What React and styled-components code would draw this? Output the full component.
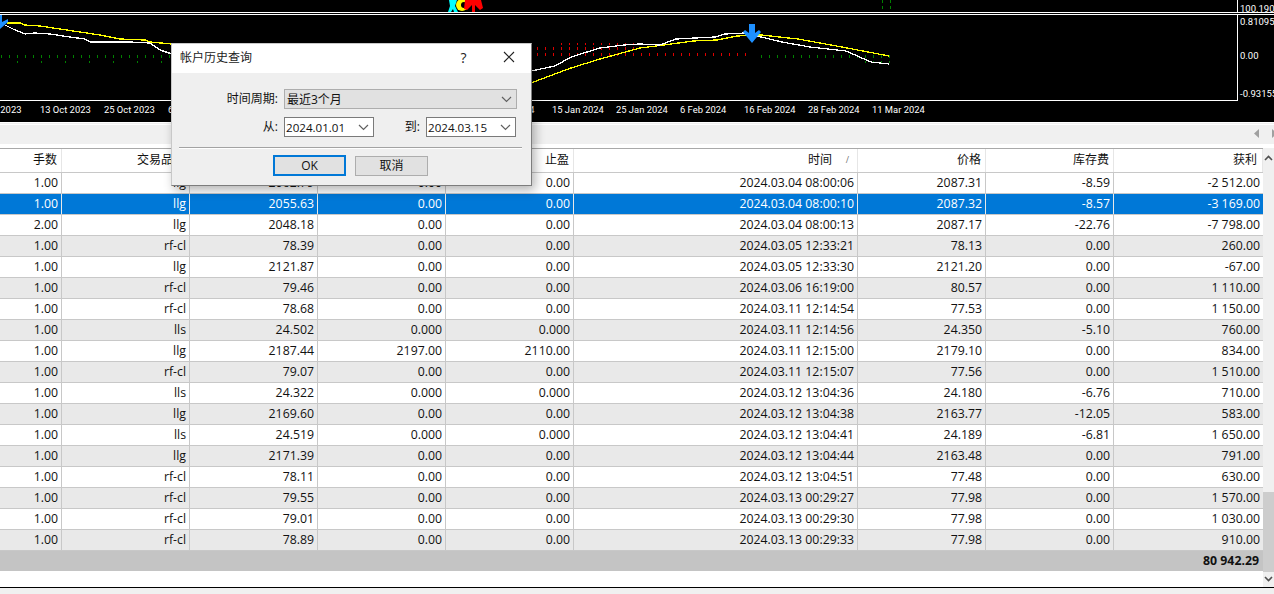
import styled, { createGlobalStyle } from "styled-components"

const GlobalStyle = createGlobalStyle`
html, body { margin:0; padding:0; background:#f0f0f0; overflow:hidden; }
body { font-family:"Open Sans","Noto Sans CJK SC",sans-serif; font-size:12.3px; color:#111; }
`
const Page = styled.div`
position:relative;
width:1274px;
height:594px;
overflow:hidden;
display:flex;
flex-direction:column;
`
const Chart = styled.div`
height:122px;
background:#000;
display:flex;
flex-direction:column;
flex-shrink:0;
color:#fff;
`
const ChartRow = styled.div`
position:relative;
height:${p => p.$h}px;
width:1238px;
box-sizing:border-box;
border-right:1px solid #fff;
border-bottom:${p => p.$line ? '1px solid #fff' : 'none'};
`
const FullLine = styled.div`
height:1px;
background:#fff;
margin-top:${p => p.$gap || 0}px;
flex-shrink:0;
`
const Drawing = styled.svg`
display:block;
`
const PriceLabel = styled.span`
position:absolute;
left:1240px;
top:${p => p.$y}px;
font-family:"Roboto",sans-serif;
font-size:9.5px;
line-height:14px;
white-space:nowrap;
color:#fff;
`
const TimeAxis = styled.div`
display:flex;
margin-left:-24px;
margin-top:1px;
width:1300px;
`
const TimeCell = styled.span`
flex:0 0 64px;
font-family:"Roboto",sans-serif;
font-size:9.4px;
line-height:16px;
white-space:nowrap;
color:#fff;
`
const Toolbar = styled.div`
height:17px;
padding-bottom:2px;
margin-top:1px;
background:#f0f0f0;
border-top:1px solid #fff;
border-bottom:4px solid #fff;
display:flex;
justify-content:flex-end;
align-items:center;
gap:13px;
flex-shrink:0;
`
const Grid = styled.div`
display:flex;
height:439px;
flex-shrink:0;
`
const Table = styled.div`
width:1263px;
background:#fff;
`
const cols = '62px 128px 128px 128px 128px 284px 128px 128px 149px'
const HeadRow = styled.div`
display:grid;
grid-template-columns:${cols};
height:25px;
box-sizing:border-box;
border-top:1px solid #a9a9a9;
border-bottom:1px solid #c8c8c8;
background:#fff;
`
const HeadCell = styled.div`
border-right:1px solid #e6e6e6;
padding-right:${p => p.$pad || 4}px;
text-align:right;
font-size:12px;
line-height:21px;
white-space:nowrap;
overflow:hidden;
position:relative;
`
const SortMark = styled.span`
position:absolute;
right:8px;
top:0;
font-size:9px;
color:#777;
`
const Row = styled.div`
display:grid;
grid-template-columns:${cols};
height:21px;
box-sizing:border-box;
border-bottom:1px solid #c8c8c8;
background:${p => p.$selected ? '#0078d7' : p.$alt ? '#e9e9e9' : '#fff'};
color:${p => p.$selected ? '#fff' : '#111'};
`
const Cell = styled.div`
border-right:1px solid ${p => p.$selected ? '#e8e8e8' : '#c8c8c8'};
padding-right:3px;
text-align:right;
line-height:20px;
white-space:nowrap;
&:last-child { border-right:none; padding-right:3px; }
`
const TotalRow = styled.div`
height:20px;
background:#c4c4c4;
text-align:right;
padding-right:4px;
font-weight:700;
line-height:20px;
`
const Scroll = styled.div`
width:11px;
background:#f0f0f0;
display:flex;
flex-direction:column;
justify-content:space-between;
align-items:center;
position:relative;
`
const ScrollThumb = styled.div`
position:absolute;
left:0;
right:0;
top:344px;
height:80px;
background:#cdcdcd;
`
const ScrollArrow = styled.svg`
display:block;
margin:${p => p.$down ? '0 0 5px' : '7px 0 0'};
`
const Footer = styled.div`
flex:1;
border-top:1px solid #000;
background:#f0f0f0;
position:relative;
`
const Dialog = styled.div`
position:absolute;
left:171px;
top:43px;
width:361px;
height:143px;
box-sizing:border-box;
background:#efefef;
border:1px solid #7d7d7d;
border-top-color:#c8c8c8;
border-left-color:#c8c8c8;
box-shadow:3px 4px 10px rgba(0,0,0,.3);
font-size:12px;
`
const TitleBar = styled.div`
height:29px;
background:#fff;
display:flex;
align-items:center;
padding-left:8px;
color:#222;
`
const Title = styled.span`
flex:1;
margin-top:-3px;
`
const TitleBtn = styled.span`
width:${p => p.$w}px;
display:flex;
justify-content:center;
margin-top:-3px;
font-size:14px;
`
const Form = styled.div`
display:grid;
grid-template-columns:105px 90px 52px 90px;
grid-auto-rows:20px;
row-gap:8px;
padding:16px 0 0 7px;
position:relative;
`
const Label = styled.label`
text-align:right;
line-height:20px;
padding-right:6px;
color:#111;
`
const Select = styled.div`
grid-column:span 3;
width:233px;
box-sizing:border-box;
background:#e1e1e1;
border:1px solid #adadad;
display:flex;
align-items:center;
justify-content:space-between;
padding:0 4px 0 2px;
`
const DateBox = styled.div`
box-sizing:border-box;
background:#fff;
border:1px solid #7a7a7a;
display:flex;
align-items:center;
justify-content:space-between;
padding:0 4px 0 1px;
font-size:11.6px;
`
const Chevron = () => <svg width="11" height="7" viewBox="0 0 11 7">
    <path d="M1 1l4.500 4.500L10 1" fill="none" stroke="#606060" strokeWidth="1.200" />
</svg>
const Divider = styled.div`
margin:10px 9px 0 7px;
height:1px;
background:#a3a3a3;
box-shadow:0 1px 0 #fff;
`
const Buttons = styled.div`
display:flex;
align-items:flex-start;
gap:9px;
margin-top:7px;
padding-left:101px;
`
const Btn = styled.button`
width:73px;
height:${p => p.$primary ? 21 : 20}px;
margin-top:${p => p.$primary ? 0 : 1}px;
box-sizing:border-box;
background:#e1e1e1;
border:${p => p.$primary ? '2px solid #0078d7' : '1px solid #adadad'};
font:inherit;
line-height:16px;
color:#111;
padding:0;
`

const yellowA = '7,23 20,23 25,25 40,26 60,29 80,32 100,35 120,39 145,40 150,42 172,44'
const whiteA = '5,25 15,30 25,34 35,33 50,34 70,37 85,39 90,42 130,42 150,43 160,50 172,54'
const whiteB = '531,71 555,66 571,57 600,48 624,45 640,44 660,45 676,39 715,37 725,34 745,33 761,37 782,42 810,47 846,51 871,62 889,64'
const yellowB = '531,83 571,68 600,59 640,48 664,45 693,41 717,40 737,36 761,35 798,39 842,47 889,56'

const ticks = (from, to) => {
    let res = []
    for (let x = from; x <= to; x += 8) res.push(x)
    return res
}

// histogram of the lower pane, drawn as the dashes the terminal leaves on a black ground
const GreenTick = ({ x, low }) => <>
    <rect x={x} y={55} width="1" height="3" fill="#008000" />
    {low && <rect x={x} y={61} width="1" height="2" fill="#008000" />}
</>
const RedTick = ({ x }) => <>
    {x > 560 && x < 640 && <rect x={x} y={43} width="1" height="2" fill="#e00000" />}
    {x < 640 && <rect x={x} y={47} width="1" height="3" fill="#e00000" />}
    <rect x={x} y={53} width="1" height="3" fill="#e00000" />
</>
const Curve = ({ points, color }) => <polyline points={points} fill="none" stroke={color} strokeWidth="1.300" shapeRendering="crispEdges" />

const MainPane = () => <Drawing width="1237" height="85" viewBox="0 15 1237 85">
    {ticks(1, 170).map(x => <GreenTick key={x} x={x} low={x % 24 == 17} />)}
    {ticks(537, 745).map(x => <RedTick key={x} x={x} />)}
    {ticks(761, 889).map(x => <GreenTick key={x} x={x} low={x > 860} />)}
    <Curve points={yellowA} color="#ffff00" />
    <Curve points={whiteA} color="#fff" />
    <Curve points={yellowB} color="#ffff00" />
    <Curve points={whiteB} color="#fff" />
    <path d="M-3 15h5v7l6-3v3l-8 7-8-7v-3l5 3z" fill="#1e90ff" />
    <path d="M749 24h6v9l4-3 2 2-9 11-9-11 2-2 4 3z" fill="#1e90ff" />
</Drawing>

const TopPane = () => <Drawing width="1237" height="12" viewBox="0 0 1237 12">
    <path d="M449 0h8l-2 6 3 6h-4l-1-3-2 3h-3l2-6z" fill="#00ffff" />
    <circle cx="462" cy="5" r="6" fill="#ffff00" />
    <circle cx="464" cy="5" r="3" fill="#000" />
    <path d="M465 0h16l2 8-3 2-5-5v7h-3V5l-5 5-3-1z" fill="#ff0000" />
    <rect x="882" y="0" width="1" height="3" fill="#008000" />
    <rect x="882" y="6" width="1" height="3" fill="#008000" />
    <rect x="890" y="0" width="1" height="3" fill="#008000" />
    <rect x="890" y="6" width="1" height="3" fill="#008000" />
</Drawing>

const dates = ['1 Oct 2023', '13 Oct 2023', '25 Oct 2023', '6 Nov 2023', '16 Nov 2023', '28 Nov 2023', '8 Dec 2023', '20 Dec 2023', '3 Jan 2024', '15 Jan 2024', '25 Jan 2024', '6 Feb 2024', '16 Feb 2024', '28 Feb 2024', '11 Mar 2024']

const rows = [
    ['1.00', 'llg', '2062.79', '0.00', '0.00', '2024.03.04 08:00:06', '2087.31', '-8.59', '-2 512.00'],
    ['1.00', 'llg', '2055.63', '0.00', '0.00', '2024.03.04 08:00:10', '2087.32', '-8.57', '-3 169.00'],
    ['2.00', 'llg', '2048.18', '0.00', '0.00', '2024.03.04 08:00:13', '2087.17', '-22.76', '-7 798.00'],
    ['1.00', 'rf-cl', '78.39', '0.00', '0.00', '2024.03.05 12:33:21', '78.13', '0.00', '260.00'],
    ['1.00', 'llg', '2121.87', '0.00', '0.00', '2024.03.05 12:33:30', '2121.20', '0.00', '-67.00'],
    ['1.00', 'rf-cl', '79.46', '0.00', '0.00', '2024.03.06 16:19:00', '80.57', '0.00', '1 110.00'],
    ['1.00', 'rf-cl', '78.68', '0.00', '0.00', '2024.03.11 12:14:54', '77.53', '0.00', '1 150.00'],
    ['1.00', 'lls', '24.502', '0.000', '0.000', '2024.03.11 12:14:56', '24.350', '-5.10', '760.00'],
    ['1.00', 'llg', '2187.44', '2197.00', '2110.00', '2024.03.11 12:15:00', '2179.10', '0.00', '834.00'],
    ['1.00', 'rf-cl', '79.07', '0.00', '0.00', '2024.03.11 12:15:07', '77.56', '0.00', '1 510.00'],
    ['1.00', 'lls', '24.322', '0.000', '0.000', '2024.03.12 13:04:36', '24.180', '-6.76', '710.00'],
    ['1.00', 'llg', '2169.60', '0.00', '0.00', '2024.03.12 13:04:38', '2163.77', '-12.05', '583.00'],
    ['1.00', 'lls', '24.519', '0.000', '0.000', '2024.03.12 13:04:41', '24.189', '-6.81', '1 650.00'],
    ['1.00', 'llg', '2171.39', '0.00', '0.00', '2024.03.12 13:04:44', '2163.48', '0.00', '791.00'],
    ['1.00', 'rf-cl', '78.11', '0.00', '0.00', '2024.03.12 13:04:51', '77.48', '0.00', '630.00'],
    ['1.00', 'rf-cl', '79.55', '0.00', '0.00', '2024.03.13 00:29:27', '77.98', '0.00', '1 570.00'],
    ['1.00', 'rf-cl', '79.01', '0.00', '0.00', '2024.03.13 00:29:30', '77.98', '0.00', '1 030.00'],
    ['1.00', 'rf-cl', '78.89', '0.00', '0.00', '2024.03.13 00:29:33', '77.98', '0.00', '910.00'],
]
const heads = ['手数', '交易品种', '价位', '止损', '止盈', '时间', '价格', '库存费', '获利']

export default function App() {
    return <Page>
        <GlobalStyle />
        <Chart>
            <ChartRow $h={12}>
                <TopPane />
                <PriceLabel $y={2}>100.190</PriceLabel>
            </ChartRow>
            <FullLine />
            <FullLine $gap={1} />
            <ChartRow $h={86} $line>
                <MainPane />
                <PriceLabel $y={0}>0.81095</PriceLabel>
                <PriceLabel $y={34}>0.00</PriceLabel>
                <PriceLabel $y={72}>-0.93155</PriceLabel>
            </ChartRow>
            <TimeAxis>
                {dates.map(d => <TimeCell key={d}>{d}</TimeCell>)}
            </TimeAxis>
        </Chart>
        <FullLine />
        <Toolbar>
            <svg width="5" height="9" viewBox="0 0 5 9"><path d="M5 0v9L0 4.500z" fill="#a0a0a0" /></svg>
            <svg width="5" height="9" viewBox="0 0 5 9" style={{ marginRight: -3 }}><path d="M0 0v9l5-4.500z" fill="#a0a0a0" /></svg>
        </Toolbar>
        <Grid>
            <Table>
                <HeadRow>
                    {heads.map((h, i) => <HeadCell key={h} $pad={i == 5 ? 25 : i == 8 ? 5 : 4}>
                        {h}
                        {i == 5 && <SortMark>/</SortMark>}
                    </HeadCell>)}
                </HeadRow>
                {rows.map((r, i) => <Row key={r[5]} $selected={i == 1} $alt={i % 2 == 1}>
                    {r.map((v, j) => <Cell key={j} $selected={i == 1}>{v}</Cell>)}
                </Row>)}
                <TotalRow>80 942.29</TotalRow>
            </Table>
            <Scroll>
                <ScrollArrow width="9" height="6" viewBox="0 0 9 6"><path d="M1 5l3.500-3.500L8 5" fill="none" stroke="#505050" strokeWidth="1.600" /></ScrollArrow>
                <ScrollThumb />
                <ScrollArrow $down width="9" height="6" viewBox="0 0 9 6"><path d="M1 1l3.500 3.500L8 1" fill="none" stroke="#505050" strokeWidth="1.600" /></ScrollArrow>
            </Scroll>
        </Grid>
        <Footer />
        <Dialog>
            <TitleBar>
                <Title>帐户历史查询</Title>
                <TitleBtn $w={45}>?</TitleBtn>
                <TitleBtn $w={45}>
                    <svg width="12" height="12" viewBox="0 0 12 12"><path d="M1 1l10 10M11 1L1 11" stroke="#222" strokeWidth="1.100" fill="none" /></svg>
                </TitleBtn>
            </TitleBar>
            <Form>
                <Label>时间周期:</Label>
                <Select>最近3个月<Chevron /></Select>
                <Label>从:</Label>
                <DateBox>2024.01.01<Chevron /></DateBox>
                <Label>到:</Label>
                <DateBox>2024.03.15<Chevron /></DateBox>
            </Form>
            <Divider />
            <Buttons>
                <Btn $primary>OK</Btn>
                <Btn>取消</Btn>
            </Buttons>
        </Dialog>
    </Page>
}
